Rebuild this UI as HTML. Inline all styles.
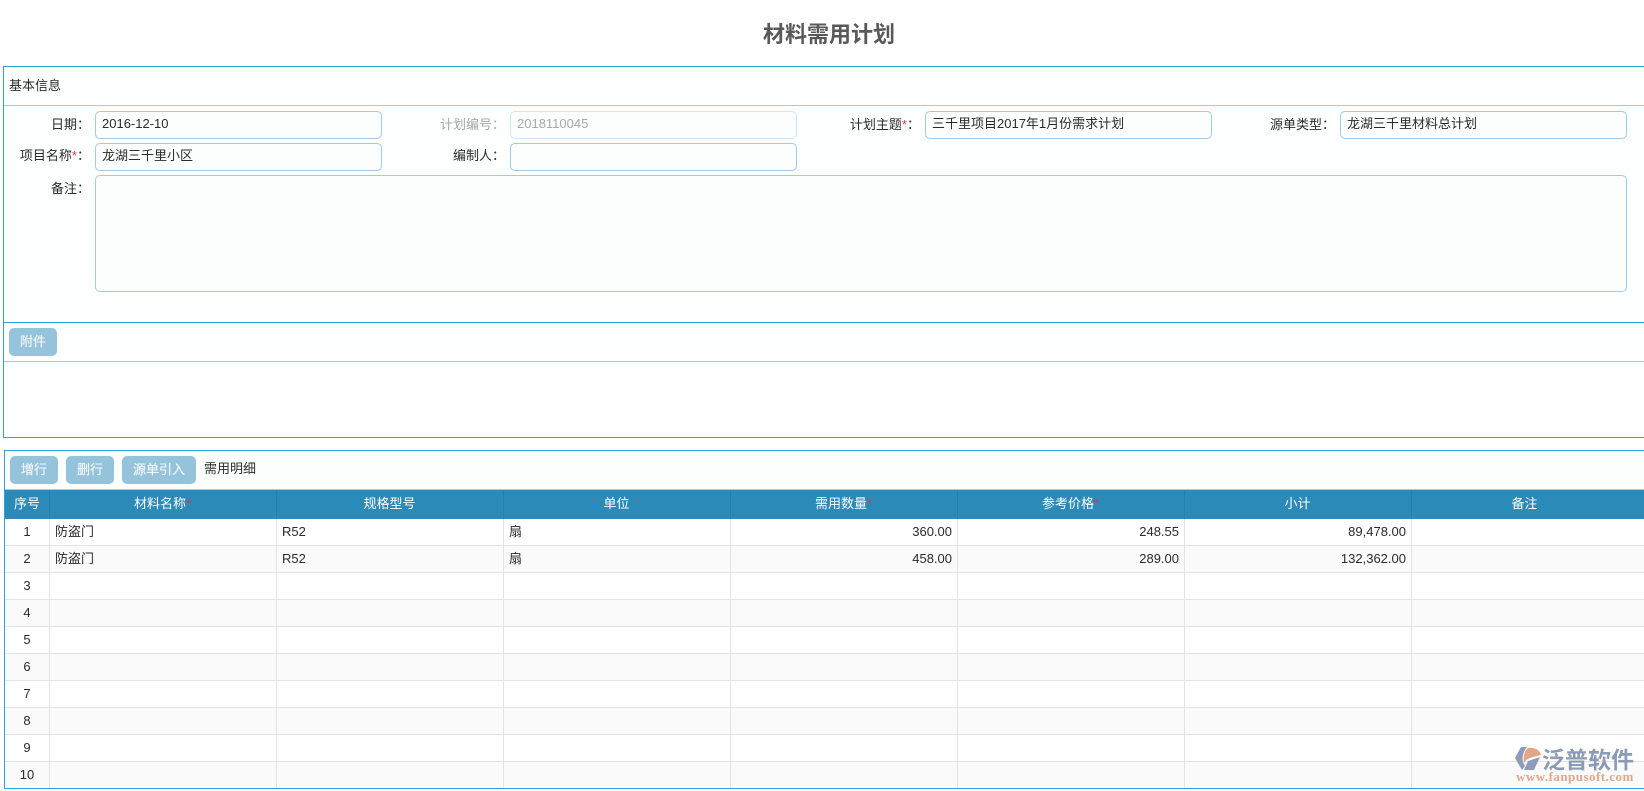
<!DOCTYPE html>
<html lang="zh"><head><meta charset="utf-8"><title>材料需用计划</title>
<style>
*{box-sizing:border-box}
html,body{margin:0;padding:0;background:#fff}
body{width:1644px;height:791px;position:relative;overflow:hidden;font:13px/16px "Liberation Sans","Noto Sans CJK SC",sans-serif;color:#2b2b2b}
.a{position:absolute}
.t{position:absolute;white-space:nowrap}
.l{position:absolute;white-space:nowrap;text-align:right;width:100px;line-height:20px}
.l i{color:#e8334a;font-style:normal}
.ip{position:absolute;height:28px;width:287px;border:1px solid #a3c9e4;border-radius:5px;background:#fcfefe;padding:0 6px;line-height:24px;white-space:nowrap}
.btn{position:absolute;height:28px;background:#96c3dc;border-radius:5px;color:#eef6fa;text-align:center;line-height:27px;text-shadow:0 0 .5px #fff}
.v{position:absolute;width:1px;background:#e4e4e4}
.h{position:absolute;left:5px;right:0;height:1px;background:#e4e4e4}
.hc{position:absolute;top:490px;height:29px;line-height:28px;color:#fff;text-align:center;white-space:nowrap}
.hc i{color:#e8334a;font-style:normal}
.hs{position:absolute;top:490px;height:29px;width:1px;background:#2780ab}
.c{position:absolute;line-height:26px;height:26px;white-space:nowrap}
.r{text-align:right;width:217px}
</style></head><body>
<div class="t" style="left:0;width:1658px;text-align:center;top:20px;font-size:22px;line-height:30px;font-weight:bold;color:#595959">材料需用计划</div>

<div class="a" style="left:3px;top:66px;width:1650px;height:372px;border:1px solid #29a3d8;background:#fcfffe"></div>
<div class="a" style="left:4px;top:105px;width:1640px;height:1px;background:#a3cbe6"></div>
<div class="a" style="left:4px;top:322px;width:1640px;height:1px;background:#29a3d8"></div>
<div class="a" style="left:4px;top:361px;width:1640px;height:1px;background:#a3cbe6"></div>
<div class="a" style="left:4px;top:362px;width:1640px;height:75px;background:#fff"></div>
<div class="t" style="left:9px;top:77px;line-height:18px">基本信息</div>

<div class="l" style="left:-10px;top:115px">日期：</div>
<div class="ip" style="left:95px;top:111px">2016-12-10</div>
<div class="l" style="left:405px;top:115px;color:#a8a8a8">计划编号：</div>
<div class="ip" style="left:510px;top:111px;color:#a8a8a8;border-color:#d3e4f0">2018110045</div>
<div class="l" style="left:820px;top:115px">计划主题<i>*</i>：</div>
<div class="ip" style="left:925px;top:111px">三千里项目2017年1月份需求计划</div>
<div class="l" style="left:1235px;top:115px">源单类型：</div>
<div class="ip" style="left:1340px;top:111px">龙湖三千里材料总计划</div>
<div class="l" style="left:-10px;top:146px">项目名称<i>*</i>：</div>
<div class="ip" style="left:95px;top:143px">龙湖三千里小区</div>
<div class="l" style="left:405px;top:146px">编制人：</div>
<div class="ip" style="left:510px;top:143px"></div>
<div class="l" style="left:-10px;top:179px">备注：</div>
<div class="ip" style="left:95px;top:175px;width:1532px;height:117px"></div>

<div class="btn" style="left:9px;top:328px;width:48px">附件</div>

<div class="a" style="left:4px;top:450px;width:1650px;height:339px;border:1px solid #29a3d8;border-bottom:2px solid #29a3d8;background:#fff"></div>
<div class="a" style="left:5px;top:451px;width:1639px;height:38px;background:#fcfefe"></div>
<div class="btn" style="left:10px;top:456px;width:48px">增行</div>
<div class="btn" style="left:66px;top:456px;width:48px">删行</div>
<div class="btn" style="left:122px;top:456px;width:74px">源单引入</div>
<div class="t" style="left:204px;top:460px;line-height:18px">需用明细</div>

<div class="a" style="left:5px;top:489px;width:1639px;height:1px;background:#a3cbe6"></div>
<div class="a" style="left:5px;top:490px;width:1639px;height:29px;background:#2b8ab8"></div>
<div class="hc" style="left:5px;width:44px">序号</div>
<div class="hc" style="left:49px;width:227px">材料名称<i>*</i></div>
<div class="hc" style="left:276px;width:227px">规格型号</div>
<div class="hc" style="left:503px;width:227px">单位</div>
<div class="hc" style="left:730px;width:227px">需用数量<i>*</i></div>
<div class="hc" style="left:957px;width:227px">参考价格<i>*</i></div>
<div class="hc" style="left:1184px;width:227px">小计</div>
<div class="hc" style="left:1411px;width:227px">备注</div>
<div class="hs" style="left:49px"></div><div class="hs" style="left:276px"></div><div class="hs" style="left:503px"></div><div class="hs" style="left:730px"></div><div class="hs" style="left:957px"></div><div class="hs" style="left:1184px"></div><div class="hs" style="left:1411px"></div>

<div class="a" style="left:5px;top:546px;width:1639px;height:26px;background:#fafafa"></div>
<div class="a" style="left:5px;top:600px;width:1639px;height:26px;background:#fafafa"></div>
<div class="a" style="left:5px;top:654px;width:1639px;height:26px;background:#fafafa"></div>
<div class="a" style="left:5px;top:708px;width:1639px;height:26px;background:#fafafa"></div>
<div class="a" style="left:5px;top:762px;width:1639px;height:26px;background:#fafafa"></div>

<div class="h" style="top:545px"></div><div class="h" style="top:572px"></div><div class="h" style="top:599px"></div><div class="h" style="top:626px"></div><div class="h" style="top:653px"></div><div class="h" style="top:680px"></div><div class="h" style="top:707px"></div><div class="h" style="top:734px"></div><div class="h" style="top:761px"></div>
<div class="v" style="left:49px;top:519px;height:269px"></div><div class="v" style="left:276px;top:519px;height:269px"></div><div class="v" style="left:503px;top:519px;height:269px"></div><div class="v" style="left:730px;top:519px;height:269px"></div><div class="v" style="left:957px;top:519px;height:269px"></div><div class="v" style="left:1184px;top:519px;height:269px"></div><div class="v" style="left:1411px;top:519px;height:269px"></div>

<div class="c" style="left:5px;width:44px;text-align:center;top:519px">1</div>
<div class="c" style="left:5px;width:44px;text-align:center;top:546px">2</div>
<div class="c" style="left:5px;width:44px;text-align:center;top:573px">3</div>
<div class="c" style="left:5px;width:44px;text-align:center;top:600px">4</div>
<div class="c" style="left:5px;width:44px;text-align:center;top:627px">5</div>
<div class="c" style="left:5px;width:44px;text-align:center;top:654px">6</div>
<div class="c" style="left:5px;width:44px;text-align:center;top:681px">7</div>
<div class="c" style="left:5px;width:44px;text-align:center;top:708px">8</div>
<div class="c" style="left:5px;width:44px;text-align:center;top:735px">9</div>
<div class="c" style="left:5px;width:44px;text-align:center;top:762px">10</div>

<div class="c" style="left:55px;top:519px">防盗门</div>
<div class="c" style="left:282px;top:519px">R52</div>
<div class="c" style="left:509px;top:519px">扇</div>
<div class="c r" style="left:735px;top:519px">360.00</div>
<div class="c r" style="left:962px;top:519px">248.55</div>
<div class="c r" style="left:1189px;top:519px">89,478.00</div>
<div class="c" style="left:55px;top:546px">防盗门</div>
<div class="c" style="left:282px;top:546px">R52</div>
<div class="c" style="left:509px;top:546px">扇</div>
<div class="c r" style="left:735px;top:546px">458.00</div>
<div class="c r" style="left:962px;top:546px">289.00</div>
<div class="c r" style="left:1189px;top:546px">132,362.00</div>

<svg class="a" style="left:1514px;top:746px" width="30" height="26" viewBox="0 0 30 26">
<path d="M7 1H13C9 6 8 11 9 16L11 20L8 24L1 12Z" fill="#8e9cb8"/>
<path d="M14 2C20 1 26 4 27 9L19 11C14 12 11 15 10 17C9 10 10 5 14 2Z" fill="#e3a68a"/>
<path d="M10 24L14 15L26 11L20 24Z" fill="#8e9cb8"/>
</svg>
<div class="t" style="left:1542px;top:747px;font-size:23px;line-height:26px;font-weight:700;color:#8c9ab5">泛普软件</div>
<div class="t" style="left:1516px;top:770px;font:bold 13px/14px 'Liberation Serif',serif;letter-spacing:.47px;color:#e3a68a">www.fanpusoft.com</div>
</body></html>
